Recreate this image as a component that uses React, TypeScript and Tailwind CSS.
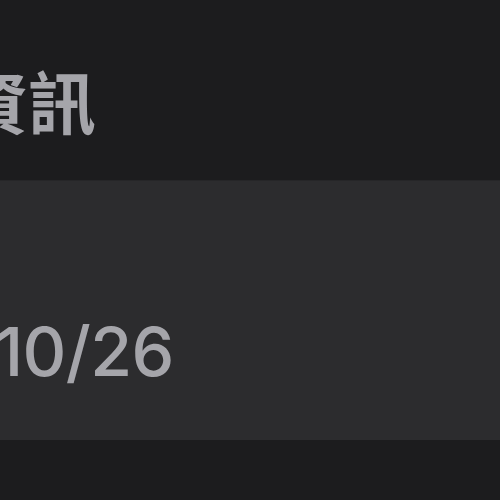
import React from 'react';

const App: React.FC = () => {
  return (
    <div className="w-[500px] h-[500px] overflow-hidden bg-[#1c1c1e] flex flex-col">
      {/* Section header */}
      <div className="h-[180px] pt-[66px] pl-0">
        <h1
          className="ml-[-40px] text-[68px] leading-none font-bold text-[#a5a5aa] whitespace-nowrap"
          style={{ fontFamily: '"Noto Sans CJK TC", "Noto Sans CJK SC", sans-serif' }}
        >
          資訊
        </h1>
      </div>

      {/* Row */}
      <div className="h-[260px] bg-[#2c2c2e] border-t border-[#262628] flex items-center">
        <div
          className="ml-[-197px] mt-[80px] text-[68px] leading-none font-medium tracking-[-0.01em] text-[#a5a5aa] whitespace-nowrap"
          style={{ fontFamily: 'Inter, "Liberation Sans", sans-serif' }}
        >
          2023/10/26
        </div>
      </div>
    </div>
  );
};

export default App;
